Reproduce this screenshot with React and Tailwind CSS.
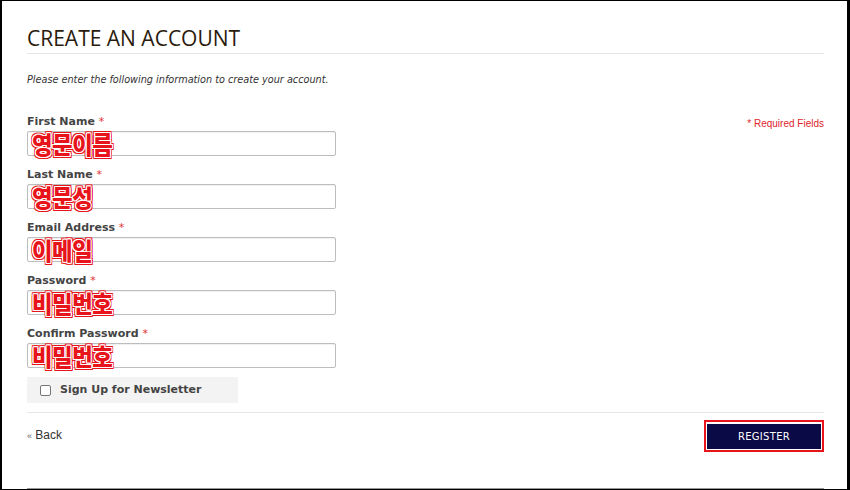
import React from 'react';

const FIELDS = [
  { label: 'First Name', note: '영문이름', type: 'text' },
  { label: 'Last Name', note: '영문성', type: 'text' },
  { label: 'Email Address', note: '이메일', type: 'email' },
  { label: 'Password', note: '비밀번호', type: 'password' },
  { label: 'Confirm Password', note: '비밀번호', type: 'password' },
];

const NOTE =
  "absolute left-[5px] top-[1px] origin-left scale-x-[0.93] font-['Noto_Sans_CJK_KR',sans-serif] font-black text-[24px] leading-[23px] tracking-[-0.5px] text-[#e8141b] pointer-events-none whitespace-nowrap " +
  '[text-shadow:1px_0_0_#fff,-1px_0_0_#fff,0_1px_0_#fff,0_-1px_0_#fff,1px_1px_0_#fff,-1px_-1px_0_#fff,1px_-1px_0_#fff,-1px_1px_0_#fff,2px_0_0_#e8141b,-2px_0_0_#e8141b,0_2px_0_#e8141b,0_-2px_0_#e8141b,2px_2px_0_#e8141b,-2px_-2px_0_#e8141b,2px_-2px_0_#e8141b,-2px_2px_0_#e8141b]';

const App = () => {
  return (
    <div className="w-[850px] h-[490px] bg-white border-black border-t border-b border-l-2 border-r-[3px] overflow-hidden flex flex-col">
      <div className="pl-[25px] pr-[23px] flex-1 flex flex-col font-['DejaVu_Sans',Verdana,sans-serif]">

        {/* HEADER */}
        <h1 className="pt-[24px] h-[53px] border-b border-[#e6e6e6] font-['Open_Sans',sans-serif] font-medium text-[21px] leading-[26px] text-[#2a1a0c]">
          CREATE AN ACCOUNT
        </h1>
        <p className="mt-[19px] text-[9.7px] leading-[14px] italic text-[#333]">
          Please enter the following information to create your account.
        </p>

        {/* FORM */}
        <div className="mt-[28px] flex justify-between">
          <div className="w-[309px] flex flex-col gap-[12px]">
            {FIELDS.map((f) => (
              <div key={f.label}>
                <label className="block mb-[2px] text-[11px] leading-[14px] font-bold text-[#444]">
                  {f.label} <span className="text-[#e03030] font-normal">*</span>
                </label>
                <div className="relative">
                  <input
                    type={f.type}
                    className="block w-full h-[25px] border border-[#bdbdbd] rounded-[2px] shadow-[inset_0_1px_1px_rgba(0,0,0,0.06)] outline-none px-2"
                  />
                  <span className={NOTE}>{f.note}</span>
                </div>
              </div>
            ))}
          </div>
          <p className="mt-[2px] text-[10px] leading-[14px] text-[#e0242b] font-['Liberation_Sans',Arial,sans-serif]">
            * Required Fields
          </p>
        </div>

        <label className="mt-[9px] w-[211px] h-[26px] bg-[#f3f3f3] flex items-center gap-[9px] pl-[13px]">
          <span className="w-[11px] h-[11px] border border-[#767676] rounded-[2px] bg-white" />
          <span className="text-[11px] font-bold text-[#444]">Sign Up for Newsletter</span>
        </label>

        {/* FOOTER */}
        <div className="mt-[9px] border-t border-[#e6e6e6] pt-[7px] flex justify-between items-start">
          <a className="mt-[8px] text-[12px] leading-[14px] text-[#333] font-['Liberation_Sans',Arial,sans-serif]">
            <span className="text-[9px] text-[#666]">«</span> Back
          </a>
          <div className="border-2 border-[#e8141b] p-[1px]">
            <button className="w-[114px] h-[25px] bg-[#0a0a46] text-white text-[10px] tracking-[0.3px]">
              REGISTER
            </button>
          </div>
        </div>

        <div className="mt-auto h-px bg-[#999]" />
      </div>
    </div>
  );
};

export default App;
